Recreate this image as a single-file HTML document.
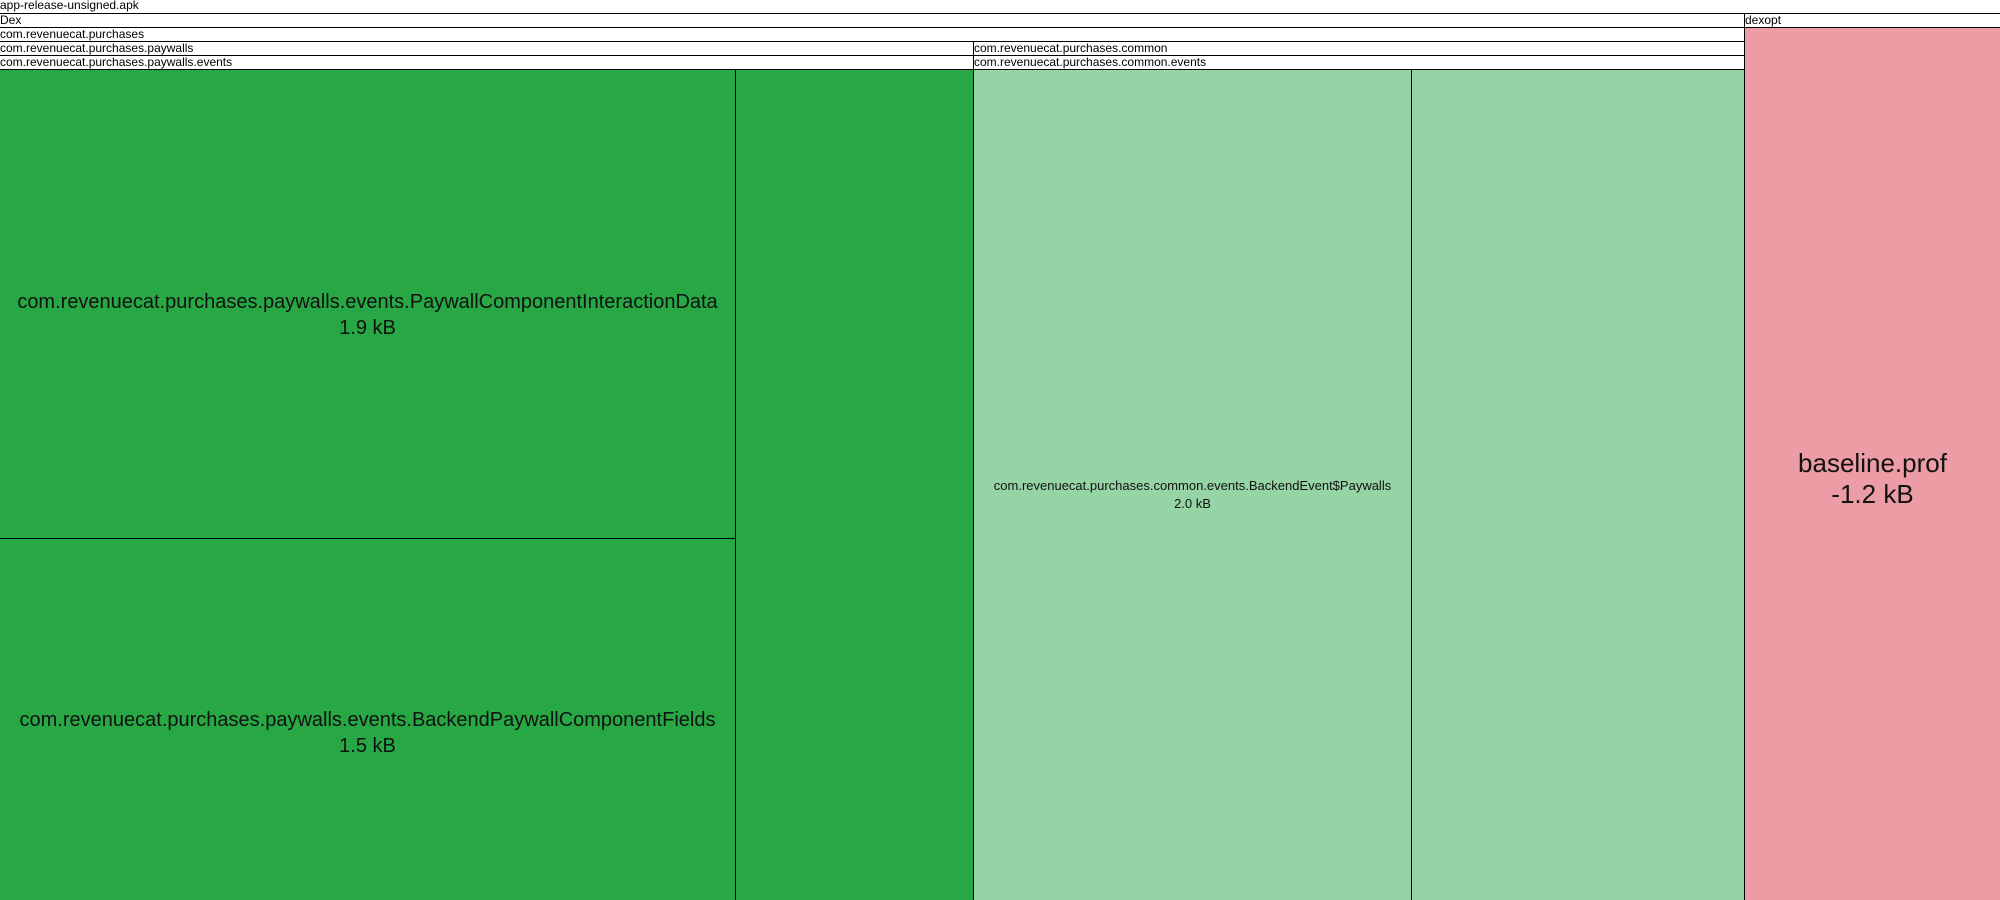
<!DOCTYPE html>
<html><head><style>
body{margin:0;width:2000px;height:900px;position:relative;overflow:hidden;background:#fff;font-family:"Liberation Sans",sans-serif;}
div{position:absolute;box-sizing:border-box;}
.h{font-size:12px;line-height:13px;border-top:1px solid #000;border-left:1px solid #000;padding-left:0;white-space:nowrap;overflow:hidden;background:#fff}
.b{border-left:1px solid #000;border-top:1px solid #000;display:flex;align-items:center;justify-content:center;text-align:center;color:#111}
.g{background:#27a844}.l{background:#95d4a5}.p{background:#eb9ca4}
</style></head><body>
<div class="h" style="left:-1px;top:-1px;width:2001px;height:14px;border-top:none">app-release-unsigned.apk</div>
<div class="h" style="left:-1px;top:13px;width:1745px;height:14px">Dex</div>
<div class="h" style="left:1744px;top:13px;width:256px;height:14px">dexopt</div>
<div class="h" style="left:-1px;top:27px;width:1745px;height:14px">com.revenuecat.purchases</div>
<div class="h" style="left:-1px;top:41px;width:974px;height:14px">com.revenuecat.purchases.paywalls</div>
<div class="h" style="left:973px;top:41px;width:771px;height:14px">com.revenuecat.purchases.common</div>
<div class="h" style="left:-1px;top:55px;width:974px;height:14px">com.revenuecat.purchases.paywalls.events</div>
<div class="h" style="left:973px;top:55px;width:771px;height:14px">com.revenuecat.purchases.common.events</div>
<div class="b g" style="left:-1px;top:69px;width:736px;height:469px;font-size:20px;line-height:26px;padding-top:22px">com.revenuecat.purchases.paywalls.events.PaywallComponentInteractionData<br>1.9 kB</div>
<div class="b g" style="left:-1px;top:538px;width:736px;height:362px;font-size:20px;line-height:26px;padding-top:26px">com.revenuecat.purchases.paywalls.events.BackendPaywallComponentFields<br>1.5 kB</div>
<div class="b g" style="left:735px;top:69px;width:238px;height:831px"></div>
<div class="b l" style="left:973px;top:69px;width:438px;height:831px;font-size:13px;line-height:18px;padding-top:19px">com.revenuecat.purchases.common.events.BackendEvent$Paywalls<br>2.0 kB</div>
<div class="b l" style="left:1411px;top:69px;width:333px;height:831px"></div>
<div class="b p" style="left:1744px;top:27px;width:256px;height:873px;font-size:26px;line-height:31px;padding-top:29px">baseline.prof<br>-1.2 kB</div>
</body></html>
